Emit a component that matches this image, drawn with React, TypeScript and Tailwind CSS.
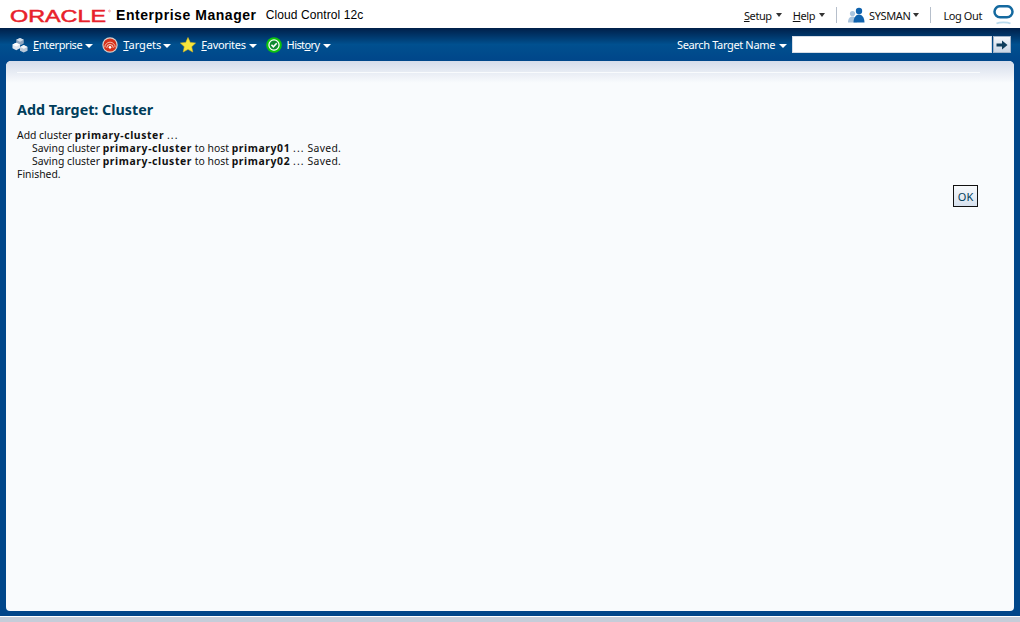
import React from "react";

const ui = "font-['Noto_Sans','DejaVu_Sans',sans-serif]";

function Caret({ className = "border-t-white" }: { className?: string }) {
  return <span className={`inline-block w-0 h-0 border-x-[3.500px] border-x-transparent border-t-[4px] ${className}`} />;
}

function NavCaret({ className = "" }: { className?: string }) {
  return <span className={`inline-block w-0 h-0 border-x-[4px] border-x-transparent border-t-[4px] border-t-white ${className}`} />;
}

function Logo() {
  return (
    <svg width="102" height="16" viewBox="0 0 102 16" className="shrink-0 mt-[1px]">
      <text x="0" y="13.500" fontFamily="Liberation Sans, sans-serif" fontSize="16.500" fill="#e8212b" stroke="#e8212b" strokeWidth="0.5" textLength="96" lengthAdjust="spacingAndGlyphs">ORACLE</text>
      <circle cx="99.500" cy="3" r="0.900" fill="none" stroke="#e8212b" strokeWidth="0.4" />
    </svg>
  );
}

function EnterpriseIcon() {
  return (
    <svg width="16" height="16" viewBox="0 0 17 17" className="shrink-0">
      <path d="M8.500 1l4 2v4l-4 2-4-2V3z" fill="#8fa6bf" />
      <path d="M8.500 1l4 2-4 2-4-2z" fill="#d4deea" />
      <path d="M4.500 6l4 2v4l-4 2-4-2V8z" fill="#dfe7f0" />
      <path d="M12.500 8.500l4 2v4l-4 2-4-2v-4z" fill="#b8c8d9" />
      <path d="M12.500 8.500l4 2-4 2-4-2z" fill="#f4f7fa" />
      <path d="M4.500 6l4 2-4 2-4-2z" fill="#ffffff" />
    </svg>
  );
}

function TargetIcon() {
  return (
    <svg width="16" height="16" viewBox="0 0 17 17" className="shrink-0">
      <circle cx="8.500" cy="8.500" r="8.200" fill="#d9d3cf" />
      <circle cx="8.500" cy="8.500" r="7" fill="#d5301a" />
      <path d="M3 11a5.500 5.500 0 0 1 11 0" fill="none" stroke="#f7c3b2" strokeWidth="1" />
      <path d="M5 11.500a3.500 3.500 0 0 1 7 0" fill="none" stroke="#fbdccf" strokeWidth="1" />
      <circle cx="8.500" cy="11" r="1.400" fill="#fff" />
    </svg>
  );
}

function StarIcon() {
  return (
    <svg width="16" height="16" viewBox="0 0 17 17" className="shrink-0">
      <path d="M8.500 0.500l2.400 5.300 5.700.6-4.200 3.900 1.200 5.700-5.100-2.900-5.100 2.900 1.200-5.700L.4 6.400l5.700-.6z" fill="#f8e63c" stroke="#e3bd1c" strokeWidth="0.6" />
    </svg>
  );
}

function HistoryIcon() {
  return (
    <svg width="16" height="16" viewBox="0 0 17 17" className="shrink-0">
      <circle cx="8.500" cy="8.500" r="8.300" fill="#0cc40c" />
      <circle cx="8.500" cy="8.500" r="5.400" fill="#0d8a30" stroke="#ffffff" strokeWidth="1.300" />
      <path d="M5.800 8.300l2 2.200 3.600-3.800" fill="none" stroke="#fff" strokeWidth="1.700" />
    </svg>
  );
}

function UserIcon() {
  return (
    <svg width="17" height="16" viewBox="0 0 17 16" className="shrink-0">
      <circle cx="4.500" cy="6.500" r="2.600" fill="#a9c4de" />
      <path d="M0 15.500c0-4 2-6 4.500-6S9 11.500 9 15.500z" fill="#a9c4de" />
      <circle cx="11" cy="4" r="3.200" fill="#0f62ad" />
      <path d="M5.500 15.500c0-5 2.500-8 5.500-8s5.500 3 5.500 8z" fill="#0f62ad" />
    </svg>
  );
}

function OracleO() {
  return (
    <svg width="21" height="20" viewBox="0 0 21 20" className="shrink-0">
      <rect x="1.500" y="1.200" width="18" height="11" rx="5.500" fill="none" stroke="#14699f" strokeWidth="2.500" />
      <path d="M3.500 18.500c3-1.600 11-1.600 14 0" fill="none" stroke="#b9dbee" strokeWidth="1.800" />
    </svg>
  );
}

function NavItem({ icon, letter, rest, rest2, tracking, gap }: { icon: React.ReactNode; letter: string; rest: string; rest2?: string; tracking: string; gap: string }) {
  return (
    <div className="flex items-center">
      {icon}
      <span className={`ml-[5px] text-white text-[11px] leading-none ${tracking}`}>
        {rest2 ? rest : null}
        <span className="underline">{letter}</span>
        {rest2 ?? rest}
      </span>
      <NavCaret className={`mt-[2px] ${gap}`} />
    </div>
  );
}

export default function App() {
  return (
    <div className={`${ui} w-[1020px] h-[622px] overflow-hidden flex flex-col bg-[#c5cdd9] text-black`}>
      <header className="h-[28px] shrink-0 bg-white flex items-center pl-[10px] pr-[6px] pt-[2px]">
        <Logo />
        <span className="ml-[4px] text-[14px] font-bold tracking-[0.55px] leading-none font-['Liberation_Sans',sans-serif]">Enterprise Manager</span>
        <span className="ml-[9px] text-[12px] tracking-[0.1px] leading-none font-['Liberation_Sans',sans-serif]">Cloud Control 12c</span>
        <div className="ml-auto flex items-center text-[11px] leading-none tracking-[-0.4px] text-[#111]">
          <span><span className="underline">S</span>etup</span>
          <Caret className="ml-[4px] border-t-[#333]" />
          <span className="ml-[11px]"><span className="underline">H</span>elp</span>
          <Caret className="ml-[4px] border-t-[#333]" />
          <span className="ml-[11px] w-px h-[16px] bg-[#b6bfcb]" />
          <span className="ml-[11px]"><UserIcon /></span>
          <span className="ml-[4px]">SYSMAN</span>
          <Caret className="ml-[3px] border-t-[#333]" />
          <span className="ml-[11px] w-px h-[16px] bg-[#b6bfcb]" />
          <span className="ml-[12px]">Log Out</span>
          <span className="ml-[11px]"><OracleO /></span>
        </div>
      </header>

      <nav className="h-[33px] shrink-0 flex items-center pl-[12px] pr-[9px] bg-gradient-to-b from-[#00204a] via-[#00508f] via-50% to-[#00468a]">
        <NavItem icon={<EnterpriseIcon />} letter="E" rest="nterprise" tracking="tracking-[-0.4px]" gap="ml-[3px]" />
        <div className="ml-[9px]"><NavItem icon={<TargetIcon />} letter="T" rest="argets" tracking="tracking-[0px]" gap="ml-[2px]" /></div>
        <div className="ml-[9px]"><NavItem icon={<StarIcon />} letter="F" rest="avorites" tracking="tracking-[-0.3px]" gap="ml-[3px]" /></div>
        <div className="ml-[9px]"><NavItem icon={<HistoryIcon />} letter="o" rest="Hist" rest2="ry" tracking="tracking-[-0.6px]" gap="ml-[4px]" /></div>
        <div className="ml-auto flex items-center">
          <span className="text-white text-[11px] leading-none tracking-[-0.35px]">Search Target Name</span>
          <NavCaret className="ml-[4px] mt-[2px]" />
          <div className="ml-[5px] w-[200px] h-[17px] bg-white border border-[#d5dce6]" />
          <div className="ml-px w-[18px] h-[17px] bg-gradient-to-b from-[#f4f7fb] to-[#c9d6e5] border border-[#9fb2c8] flex items-center justify-center">
            <svg width="12" height="10" viewBox="0 0 12 10"><path d="M0.500 3.500h5.500V0.500L11.500 5 6 9.500v-3H0.500z" fill="#0d3d5c" /></svg>
          </div>
        </div>
      </nav>

      <div className="h-[555px] shrink-0 bg-[#00468a] px-[6px] pb-[5px] flex">
        <main className="relative flex-1 rounded-t-[5px] rounded-b-[4px] bg-[#f9fbfd] overflow-hidden">
          <div className="absolute inset-x-0 top-0 h-[22px] bg-gradient-to-b from-[#d5dcea] to-[#f9fbfd]" />
          <div className="absolute left-[11px] top-[11px] w-[963px] h-px bg-[#f9fbfd]" />
          <div className="relative pt-[40px] pl-[11px] pr-[36px]">
            <h1 className="text-[14.300px] font-bold leading-[18px] text-[#003d5b]">Add Target: Cluster</h1>
            <div className="mt-[10px] text-[10.400px] leading-[13px] text-[#111] [&_b]:tracking-[0.6px]">
              <div>Add cluster <b>primary-cluster</b> <span className="tracking-[1.200px]">...</span></div>
              <div className="pl-[15px]">Saving cluster <b>primary-cluster</b> to host <b>primary01</b> <span className="tracking-[1.200px]">...</span> <span className="tracking-[0.3px]">Saved.</span></div>
              <div className="pl-[15px]">Saving cluster <b>primary-cluster</b> to host <b>primary02</b> <span className="tracking-[1.200px]">...</span> <span className="tracking-[0.3px]">Saved.</span></div>
              <div>Finished.</div>
            </div>
            <div className="flex justify-end mt-[4px]">
              <button className="w-[25px] h-[22px] border border-[#111] bg-gradient-to-b from-[#f8fafc] to-[#d7e1ee] text-[11px] leading-none text-[#003d5b]">OK</button>
            </div>
          </div>
        </main>
      </div>

      <div className="h-px shrink-0 bg-white" />
      <div className="flex-1 bg-[#c5cdd9]" />
    </div>
  );
}
